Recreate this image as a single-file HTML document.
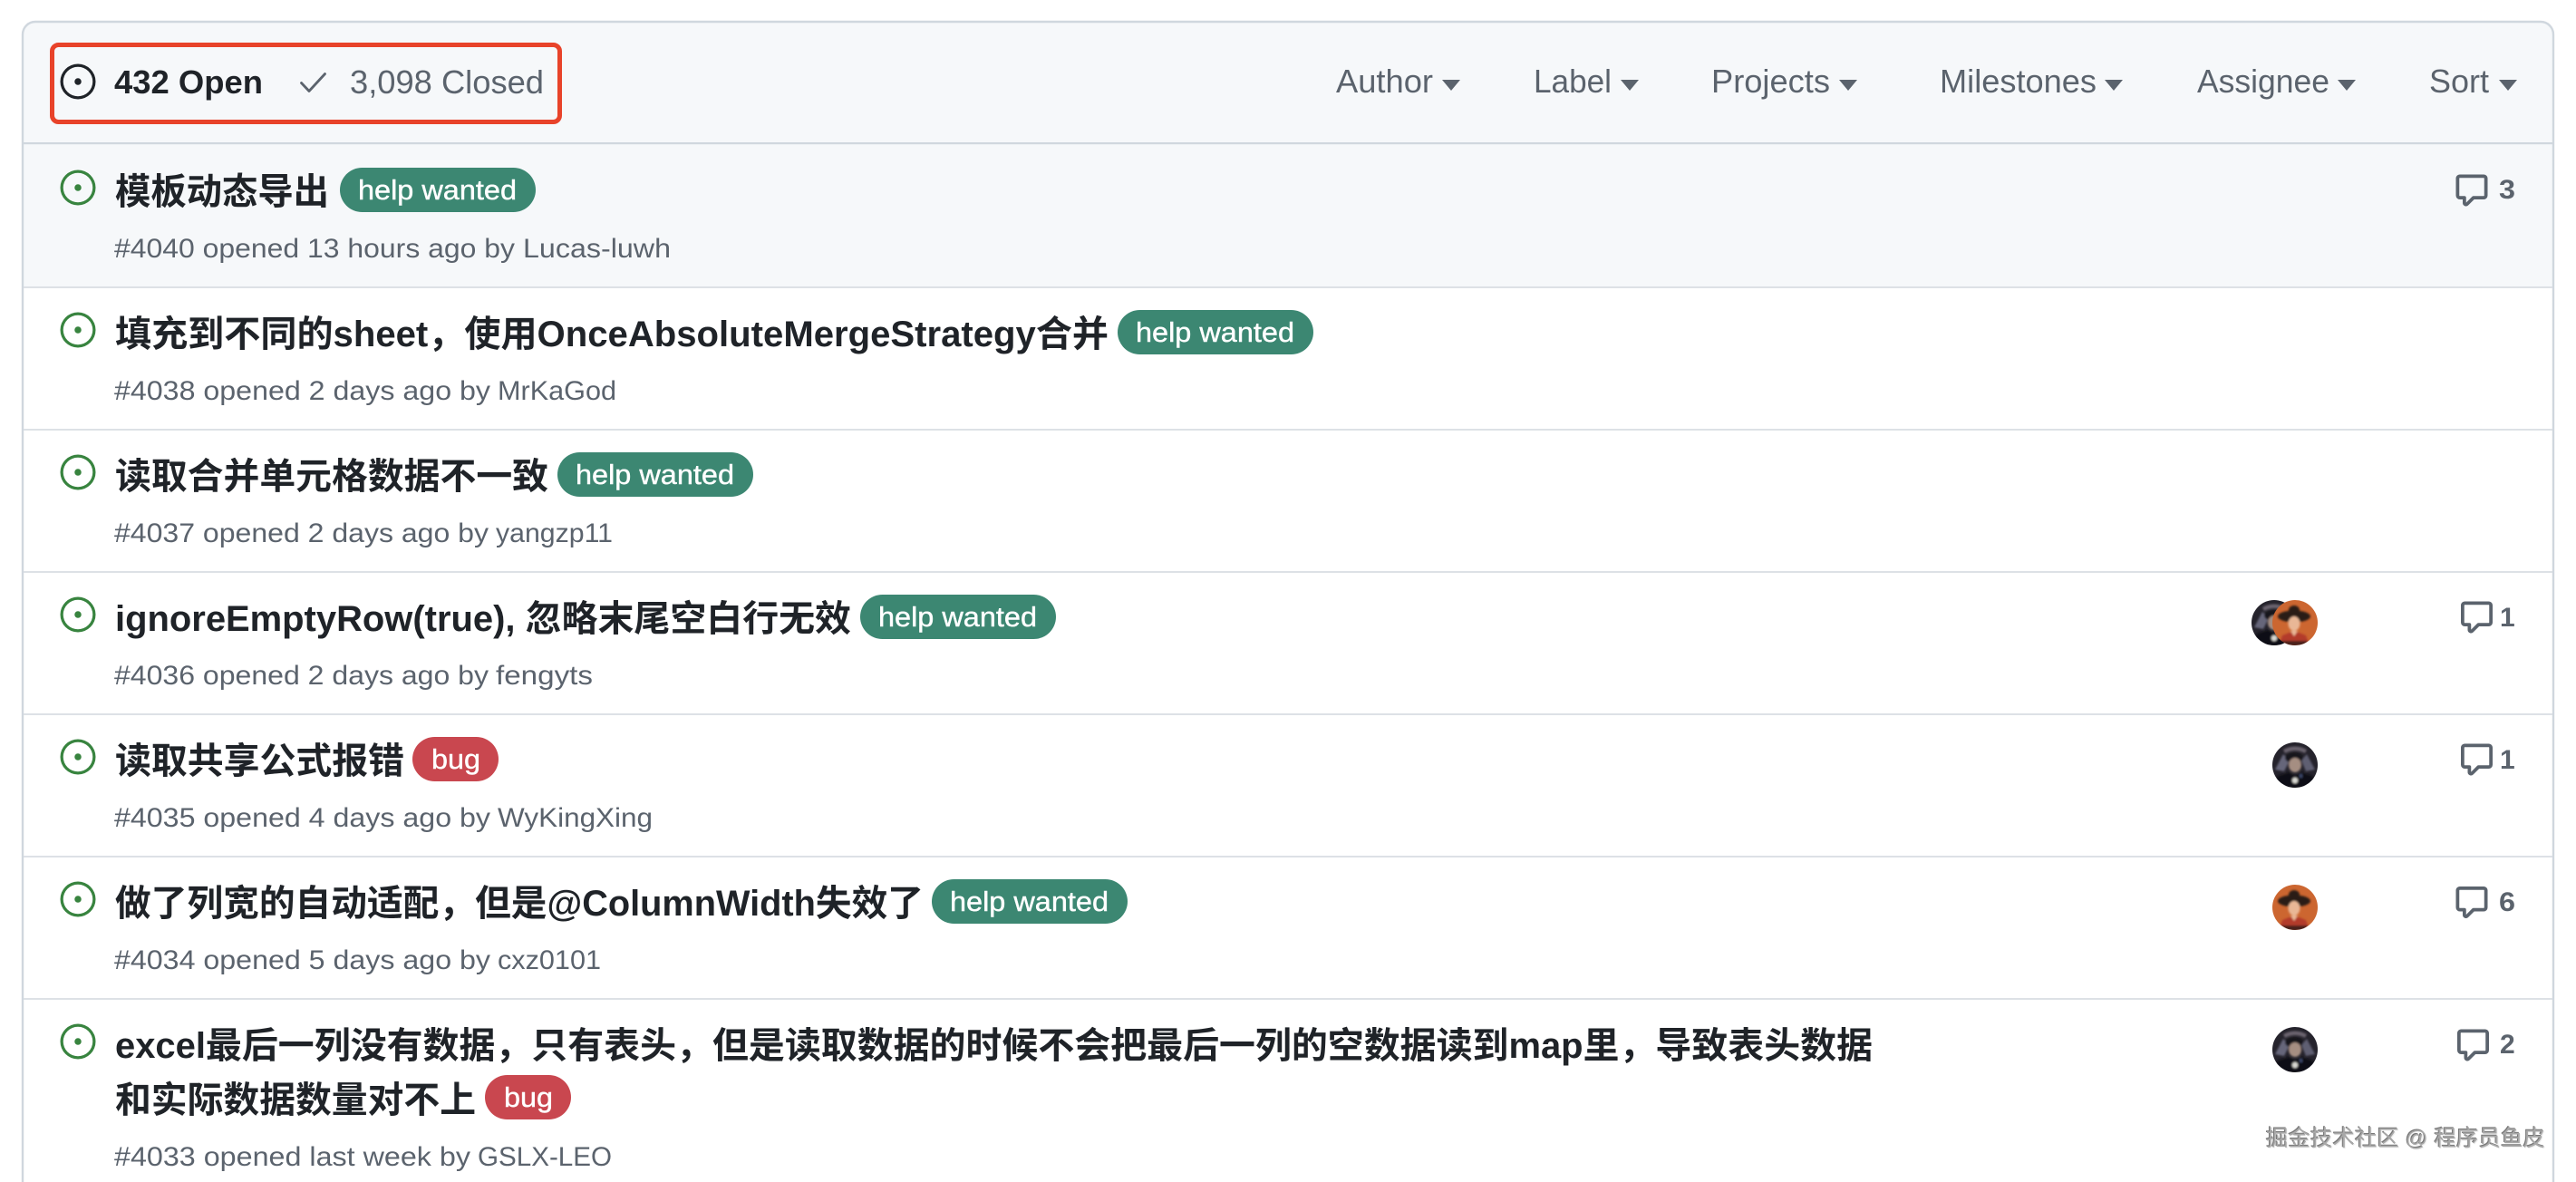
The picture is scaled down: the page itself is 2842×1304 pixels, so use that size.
<!DOCTYPE html>
<html lang="zh"><head><meta charset="utf-8"><title>Issues</title>
<style>
html,body{margin:0;padding:0;background:#fff;width:2842px;height:1304px;overflow:hidden}
svg{position:absolute;left:0;top:0;display:block}
text{font-family:"Liberation Sans","Noto Sans CJK SC",sans-serif;white-space:pre}
.t{font-size:40px;font-weight:700;fill:#1f2328}
.m{font-size:30px;fill:#5b636d}
.l{font-size:31px;fill:#fff;stroke:#fff;stroke-width:.4}
.f{font-size:36px;fill:#5b636d}
.c{font-size:30px;font-weight:700;fill:#5b636d}
.wm{position:absolute;left:2500px;top:1241px;width:310px;font:24.5px/32px "Liberation Sans","Noto Sans CJK SC",sans-serif;color:#a8a8a8;text-shadow:-1px -1px 0 #777,1px 1px 0 #f0f0f0;white-space:nowrap}
</style></head><body>
<svg width="2842" height="1304" viewBox="0 0 2842 1304" xmlns="http://www.w3.org/2000/svg">
<defs>
<symbol id="io" viewBox="0 0 16 16"><path fill-rule="evenodd" d="M8 9.5a1.5 1.5 0 100-3 1.5 1.5 0 000 3z"/><path fill-rule="evenodd" d="M8 .2a7.8 7.8 0 100 15.6A7.8 7.8 0 008 .2zM1.5 8a6.5 6.5 0 1113 0 6.5 6.5 0 01-13 0z"/></symbol>
<symbol id="cm" viewBox="0 0 16 16"><path fill-rule="evenodd" d="M2.75 2.5a.25.25 0 00-.25.25v7.5c0 .138.112.25.25.25h2a.75.75 0 01.75.75v2.19l2.72-2.72a.75.75 0 01.53-.22h4.5a.25.25 0 00.25-.25v-7.5a.25.25 0 00-.25-.25H2.75zM1 2.75C1 1.784 1.784 1 2.75 1h10.5c.966 0 1.75.784 1.75 1.75v7.5A1.75 1.75 0 0113.25 12H9.06l-2.573 2.573A1.457 1.457 0 014 13.543V12H2.75A1.75 1.75 0 011 10.25v-7.5z"/></symbol>
<filter id="bl" x="-10%" y="-10%" width="120%" height="120%"><feGaussianBlur stdDeviation="1.1"/></filter>
<clipPath id="cc"><circle cx="25" cy="25" r="25"/></clipPath>
<symbol id="dark" viewBox="0 0 50 50"><g clip-path="url(#cc)"><rect width="50" height="50" fill="#25232c"/><g filter="url(#bl)">
<path d="M3 30 L12 13 L19 20 L13 32Z" fill="#66667a"/><path d="M47 30 L38 13 L32 20 L37 32Z" fill="#5f5f72"/>
<path d="M12 8 Q25 1 38 8 L36 12 Q25 6 14 12Z" fill="#6b646e"/>
<ellipse cx="24" cy="17" rx="10" ry="6" fill="#15131a"/><ellipse cx="25" cy="25" rx="7" ry="8" fill="#a58e82"/>
<path d="M0 50 L6 37 L18 33 L25 37 L32 33 L44 37 L50 50Z" fill="#0f0f14"/><ellipse cx="25" cy="42" rx="3.2" ry="3.2" fill="#d8d8d2"/><rect x="30" y="35" width="3" height="4" fill="#3c4a6c"/></g></g></symbol>
<symbol id="org" viewBox="0 0 50 50"><g clip-path="url(#cc)"><rect width="50" height="50" fill="#cc6630"/><g filter="url(#bl)">
<ellipse cx="24" cy="18" rx="18" ry="6.5" fill="#2a1b16"/><ellipse cx="24" cy="11" rx="6" ry="5" fill="#2a1b16"/>
<ellipse cx="24" cy="26" rx="6.5" ry="8" fill="#e9b796"/>
<path d="M7 50 L11 39 L24 34 L37 39 L41 50Z" fill="#b33a2a"/><path d="M20 34 L24 40 L28 34Z" fill="#e9b796"/>
<rect x="9" y="45" width="30" height="6" fill="#4a211c"/></g></g></symbol>
</defs>

<!-- card -->
<path d="M25 1310 V38 a14 14 0 0 1 14 -14 H2803 a14 14 0 0 1 14 14 V1310" fill="#fff"/>
<path d="M25 158 V38 a14 14 0 0 1 14 -14 H2803 a14 14 0 0 1 14 14 V158Z" fill="#f6f8fa"/>
<rect x="25" y="158" width="2792" height="159" fill="#f6f8fa"/>
<path d="M25 1310 V38 a14 14 0 0 1 14 -14 H2803 a14 14 0 0 1 14 14 V1310" fill="none" stroke="#d0d7de" stroke-width="2.4"/>
<rect x="26" y="157" width="2790" height="2.2" fill="#d0d7de"/>
<g fill="#dde1e6">
<rect x="26" y="316" width="2790" height="2"/><rect x="26" y="473" width="2790" height="2"/><rect x="26" y="630" width="2790" height="2"/><rect x="26" y="787" width="2790" height="2"/><rect x="26" y="944" width="2790" height="2"/><rect x="26" y="1101" width="2790" height="2"/>
</g>

<!-- red box -->
<rect x="57.5" y="49.5" width="560" height="85" rx="7" fill="none" stroke="#e8432a" stroke-width="5"/>

<!-- header left -->
<use href="#io" x="66" y="70" width="40" height="40" fill="#1f2328"/>
<text x="126" y="103" font-size="36" font-weight="700" fill="#1f2328" textLength="164" lengthAdjust="spacingAndGlyphs">432 Open</text>
<path d="M332.5 91.5 L341 100.5 L358.5 81.5" fill="none" stroke="#5b636d" stroke-width="2.8" stroke-linecap="round" stroke-linejoin="round"/>
<text x="386" y="103" font-size="36" fill="#5b636d" textLength="214" lengthAdjust="spacingAndGlyphs">3,098 Closed</text>

<!-- filters -->
<text class="f" x="1474" y="102" textLength="107" lengthAdjust="spacingAndGlyphs">Author</text><path d="M1591 88h20l-10 12z" fill="#5b636d"/>
<text class="f" x="1692" y="102" textLength="86" lengthAdjust="spacingAndGlyphs">Label</text><path d="M1788 88h20l-10 12z" fill="#5b636d"/>
<text class="f" x="1888" y="102" textLength="131" lengthAdjust="spacingAndGlyphs">Projects</text><path d="M2029 88h20l-10 12z" fill="#5b636d"/>
<text class="f" x="2140" y="102" textLength="173" lengthAdjust="spacingAndGlyphs">Milestones</text><path d="M2322 88h20l-10 12z" fill="#5b636d"/>
<text class="f" x="2424" y="102" textLength="146" lengthAdjust="spacingAndGlyphs">Assignee</text><path d="M2579 88h20l-10 12z" fill="#5b636d"/>
<text class="f" x="2680" y="102" textLength="66" lengthAdjust="spacingAndGlyphs">Sort</text><path d="M2757 88h20l-10 12z" fill="#5b636d"/>

<!-- row icons -->
<g fill="#38843f">
<use href="#io" x="66" y="187" width="40" height="40"/>
<use href="#io" x="66" y="344" width="40" height="40"/>
<use href="#io" x="66" y="501" width="40" height="40"/>
<use href="#io" x="66" y="658" width="40" height="40"/>
<use href="#io" x="66" y="815" width="40" height="40"/>
<use href="#io" x="66" y="972" width="40" height="40"/>
<use href="#io" x="66" y="1129" width="40" height="40"/>
</g>

<!-- titles -->
<text class="t" x="127" y="225" textLength="236" lengthAdjust="spacingAndGlyphs">模板动态导出</text>
<text class="t" x="127" y="382" textLength="1096" lengthAdjust="spacingAndGlyphs">填充到不同的sheet，使用OnceAbsoluteMergeStrategy合并</text>
<text class="t" x="127" y="539" textLength="478" lengthAdjust="spacingAndGlyphs">读取合并单元格数据不一致</text>
<text class="t" x="127" y="696" textLength="812" lengthAdjust="spacingAndGlyphs">ignoreEmptyRow(true), 忽略末尾空白行无效</text>
<text class="t" x="127" y="853" textLength="319" lengthAdjust="spacingAndGlyphs">读取共享公式报错</text>
<text class="t" x="127" y="1010" textLength="892" lengthAdjust="spacingAndGlyphs">做了列宽的自动适配，但是@ColumnWidth失效了</text>
<text class="t" x="127" y="1167" textLength="1939" lengthAdjust="spacingAndGlyphs">excel最后一列没有数据，只有表头，但是读取数据的时候不会把最后一列的空数据读到map里，导致表头数据</text>
<text class="t" x="127" y="1227" textLength="398" lengthAdjust="spacingAndGlyphs">和实际数据数量对不上</text>

<!-- labels -->
<g fill="#3c8772">
<rect x="375" y="185" width="216" height="49" rx="24.5"/>
<rect x="1233" y="342" width="216" height="49" rx="24.5"/>
<rect x="615" y="499" width="216" height="49" rx="24.5"/>
<rect x="949" y="656" width="216" height="49" rx="24.5"/>
<rect x="1028" y="970" width="216" height="49" rx="24.5"/>
</g>
<g fill="#c9474f">
<rect x="455" y="813" width="95" height="49" rx="24.5"/>
<rect x="535" y="1186" width="95" height="49" rx="24.5"/>
</g>
<text class="l" x="395" y="220" textLength="175" lengthAdjust="spacingAndGlyphs">help wanted</text>
<text class="l" x="1253" y="377" textLength="175" lengthAdjust="spacingAndGlyphs">help wanted</text>
<text class="l" x="635" y="534" textLength="175" lengthAdjust="spacingAndGlyphs">help wanted</text>
<text class="l" x="969" y="691" textLength="175" lengthAdjust="spacingAndGlyphs">help wanted</text>
<text class="l" x="1048" y="1005" textLength="175" lengthAdjust="spacingAndGlyphs">help wanted</text>
<text class="l" x="476" y="848" textLength="54" lengthAdjust="spacingAndGlyphs">bug</text>
<text class="l" x="556" y="1221" textLength="54" lengthAdjust="spacingAndGlyphs">bug</text>

<!-- meta -->
<text class="m" x="126" y="284" textLength="442" lengthAdjust="spacingAndGlyphs">#4040 opened 13 hours ago by</text><text class="m" x="577" y="284" textLength="163" lengthAdjust="spacingAndGlyphs">Lucas-luwh</text>
<text class="m" x="126" y="441" textLength="415" lengthAdjust="spacingAndGlyphs">#4038 opened 2 days ago by</text><text class="m" x="549" y="441" textLength="131" lengthAdjust="spacingAndGlyphs">MrKaGod</text>
<text class="m" x="126" y="598" textLength="413" lengthAdjust="spacingAndGlyphs">#4037 opened 2 days ago by</text><text class="m" x="547" y="598" textLength="129" lengthAdjust="spacingAndGlyphs">yangzp11</text>
<text class="m" x="126" y="755" textLength="413" lengthAdjust="spacingAndGlyphs">#4036 opened 2 days ago by</text><text class="m" x="547" y="755" textLength="107" lengthAdjust="spacingAndGlyphs">fengyts</text>
<text class="m" x="126" y="912" textLength="415" lengthAdjust="spacingAndGlyphs">#4035 opened 4 days ago by</text><text class="m" x="549" y="912" textLength="171" lengthAdjust="spacingAndGlyphs">WyKingXing</text>
<text class="m" x="126" y="1069" textLength="415" lengthAdjust="spacingAndGlyphs">#4034 opened 5 days ago by</text><text class="m" x="549" y="1069" textLength="114" lengthAdjust="spacingAndGlyphs">cxz0101</text>
<text class="m" x="126" y="1286" textLength="393" lengthAdjust="spacingAndGlyphs">#4033 opened last week by</text><text class="m" x="527" y="1286" textLength="148" lengthAdjust="spacingAndGlyphs">GSLX-LEO</text>

<!-- avatars -->
<use href="#dark" x="2484" y="662" width="50" height="50"/>
<use href="#org" x="2507" y="662" width="50" height="50"/>
<use href="#dark" x="2507" y="819" width="50" height="50"/>
<use href="#org" x="2507" y="976" width="50" height="50"/>
<use href="#dark" x="2507" y="1133" width="50" height="50"/>

<!-- comments -->
<g fill="#5b636d">
<use href="#cm" x="2707" y="190" width="40" height="40"/>
<use href="#cm" x="2712.5" y="661" width="40" height="40"/>
<use href="#cm" x="2712.5" y="818" width="40" height="40"/>
<use href="#cm" x="2707" y="975.5" width="40" height="40"/>
<use href="#cm" x="2708.5" y="1133" width="40" height="40"/>
</g>
<text class="c" x="2757" y="219" textLength="18" lengthAdjust="spacingAndGlyphs">3</text>
<text class="c" x="2758" y="691">1</text>
<text class="c" x="2758" y="848">1</text>
<text class="c" x="2757" y="1005" textLength="18" lengthAdjust="spacingAndGlyphs">6</text>
<text class="c" x="2758" y="1162">2</text>
</svg>
<div class="wm">掘金技术社区 @ 程序员鱼皮</div>
</body></html>
